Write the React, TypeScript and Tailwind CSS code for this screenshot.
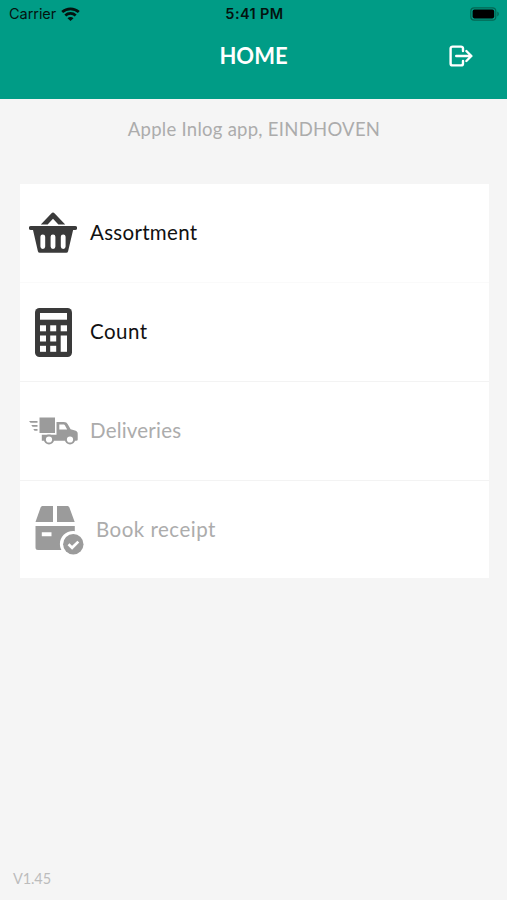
import type { ReactNode } from "react";

function WifiIcon() {
  return (
    <svg width="19" height="15" viewBox="0 0 19 15" fill="none" stroke="#04130f" strokeWidth="2.7">
      <path d="M1.2 5.1C5.8.7 13.2.7 17.8 5.1" />
      <path d="M4.3 8.5c2.9-2.8 7.5-2.8 10.4 0" />
      <path d="M9.5 14.1 6.5 11.2c1.5-1.5 4.5-1.5 6 0Z" fill="#04130f" stroke="none" />
    </svg>
  );
}

function BatteryIcon() {
  return (
    <svg width="30" height="14" viewBox="0 0 30 14">
      <rect x="0.8" y="0.8" width="25" height="12.4" rx="3.4" fill="none" stroke="#046653" strokeWidth="1.2" />
      <rect x="2.6" y="2.6" width="21.6" height="8.8" rx="1.8" fill="#000" />
      <path d="M27.3 4.6c2 .8 2 4 0 4.8Z" fill="#046653" />
    </svg>
  );
}

function LogoutIcon() {
  return (
    <svg width="24" height="22" viewBox="0 0 24 22" fill="none" stroke="#fff" strokeWidth="2.4" strokeLinecap="round" strokeLinejoin="round">
      <path d="M14 6V3.6a2 2 0 0 0-2-2H3.6a2 2 0 0 0-2 2v14.8a2 2 0 0 0 2 2H12a2 2 0 0 0 2-2V16" />
      <path d="M7.2 11h15M17.4 6l5 5-5 5" />
    </svg>
  );
}

function BasketIcon() {
  return (
    <svg width="48" height="42" viewBox="0 0 48 42" fill="#3a3a3a">
      <path d="M11.800 12.500 22.300 1.400a2.400 2.400 0 0 1 3.400 0L36.200 12.500h-6.800L24 6.700 18.600 12.500Z" />
      <path
        fillRule="evenodd"
        d="M1.800 14h44.400a1.800 1.800 0 0 1 0 4h-2.100l-5 21.200a2 2 0 0 1-2 1.600H10.900a2 2 0 0 1-2-1.600L4 18H1.800a1.800 1.800 0 0 1 0-4ZM11.400 24.800v9.800a2.400 2.400 0 0 0 4.800 0v-9.800a2.400 2.400 0 0 0-4.800 0ZM21.600 24.800v9.800a2.400 2.400 0 0 0 4.800 0v-9.800a2.400 2.400 0 0 0-4.800 0ZM31.800 24.800v9.800a2.400 2.400 0 0 0 4.800 0v-9.800a2.400 2.400 0 0 0-4.800 0Z"
      />
    </svg>
  );
}

function CalculatorIcon() {
  return (
    <svg width="37" height="49" viewBox="0 0 37 49">
      <rect width="37" height="49" rx="4.5" fill="#3a3a3a" />
      <g fill="#fff">
        <rect x="5" y="5" width="27" height="6.7" />
        <rect x="5" y="17.3" width="6" height="6" />
        <rect x="15.2" y="17.3" width="6" height="6" />
        <rect x="25.7" y="17.3" width="6.3" height="6" />
        <rect x="5" y="27.5" width="6" height="6" />
        <rect x="15.2" y="27.5" width="6" height="6" />
        <rect x="5" y="37.8" width="6" height="6" />
        <rect x="15.2" y="37.8" width="6" height="6" />
        <rect x="25.7" y="27.5" width="6.3" height="16.3" />
      </g>
    </svg>
  );
}

function TruckIcon() {
  return (
    <svg width="49" height="28" viewBox="0 0 49 28" fill="#9b9b9b">
      <path d="M0 4h8.5v1.8H1.5ZM2.3 8h6.2v1.8H3.5ZM4.3 12h4.2v1.8H5.5Z" />
      <rect x="10.5" y="0.5" width="15.5" height="15.5" />
      <path
        fillRule="evenodd"
        d="M27.500 5h7.200c2.200 0 3.300.8 4.200 2.500l2.700 4.800 4.400 1.200c1.900.5 2.700 1.500 2.700 3.300v5.700c0 .8-.5 1.200-1.200 1.200H12.800v-5.900h14.700ZM30.300 7.600v5h7.900l-2.200-4c-.4-.7-.8-1-1.600-1Z"
      />
      <circle cx="20" cy="22.5" r="4.1" fill="#fff" stroke="#9b9b9b" strokeWidth="2" />
      <circle cx="41" cy="22.5" r="4.1" fill="#fff" stroke="#9b9b9b" strokeWidth="2" />
    </svg>
  );
}

function PackageIcon() {
  return (
    <svg width="49" height="50" viewBox="0 0 49 50" fill="#9b9b9b">
      <path d="M8 1h10v16H.5L5.5 2.8C5.9 1.600 6.700 1 8 1ZM22 1h10c1.300 0 2.100.6 2.500 1.800L39.700 17H22Z" />
      <path
        fillRule="evenodd"
        d="M.5 21h39.300v5.200c-8.200-1-14.900 5.300-14.900 12.800 0 2.200.5 4.200 1.500 6H3a2.500 2.500 0 0 1-2.500-2.500ZM6.800 27.300v4h9.700v-4Z"
      />
      <circle cx="38.3" cy="39.3" r="10.2" />
      <path d="m33.500 39.300 3.600 3.500 6.200-6.200" fill="none" stroke="#fff" strokeWidth="2.7" />
    </svg>
  );
}

type RowProps = { icon: ReactNode; label: string; disabled?: boolean; className: string };

function MenuRow({ icon, label, disabled, className }: RowProps) {
  return (
    <button
      className={`flex h-[99px] w-full items-center border-b text-left text-[20.5px] last:h-[97px] last:border-b-0 ${
        disabled ? "text-[#acacac]" : "text-[#111]"
      } ${className}`}
    >
      {icon}
      <span className={disabled ? "pb-px" : "pb-[2px]"}>{label}</span>
    </button>
  );
}

export default function App() {
  return (
    <div className="flex h-[900px] w-[507px] flex-col bg-[#f5f5f5] font-['Lato',sans-serif]">
      <header className="h-[98.5px] bg-[#009c86]">
        <div className="grid h-7 grid-cols-3 items-center pr-[7px] pl-[9px] font-['Inter',sans-serif] text-[#04130f]">
          <div className="flex items-center gap-[5px] text-[14.5px] tracking-[-0.05px]">
            <span>Carrier</span>
            <WifiIcon />
          </div>
          <div className="text-center text-[14.5px] font-semibold tracking-[0.4px]">5:41 PM</div>
          <div className="flex justify-end">
            <BatteryIcon />
          </div>
        </div>
        <div className="grid h-[55px] grid-cols-3 items-center pr-[34px] pl-[34px]">
          <span />
          <h1 className="text-center text-[22px] font-bold text-white">HOME</h1>
          <div className="flex justify-end">
            <LogoutIcon />
          </div>
        </div>
      </header>
      <p className="mt-[16.5px] h-7 pl-px text-center text-[18.5px] leading-7 tracking-[0.27px] text-[#acacac]">
        Apple Inlog app, EINDHOVEN
      </p>
      <main className="mt-[41px] mr-[18px] ml-5 bg-white">
        <MenuRow icon={<BasketIcon />} label="Assortment" className="gap-[13px] border-[#fafafa] pl-[9px] tracking-[0.3px]" />
        <MenuRow icon={<CalculatorIcon />} label="Count" className="gap-[18px] border-[#f3f3f3] pl-[15px] tracking-[0.5px]" />
        <MenuRow icon={<TruckIcon />} label="Deliveries" disabled className="gap-[12px] border-[#f3f3f3] pl-[9px] tracking-[0.2px]" />
        <MenuRow icon={<PackageIcon />} label="Book receipt" disabled className="gap-[12px] pl-[15px] tracking-[0.5px]" />
      </main>
      <footer className="mt-auto px-[13px] pb-[11px] text-[14.5px] leading-5 tracking-[-0.1px] text-[#bcbcbc]">V1.45</footer>
    </div>
  );
}
